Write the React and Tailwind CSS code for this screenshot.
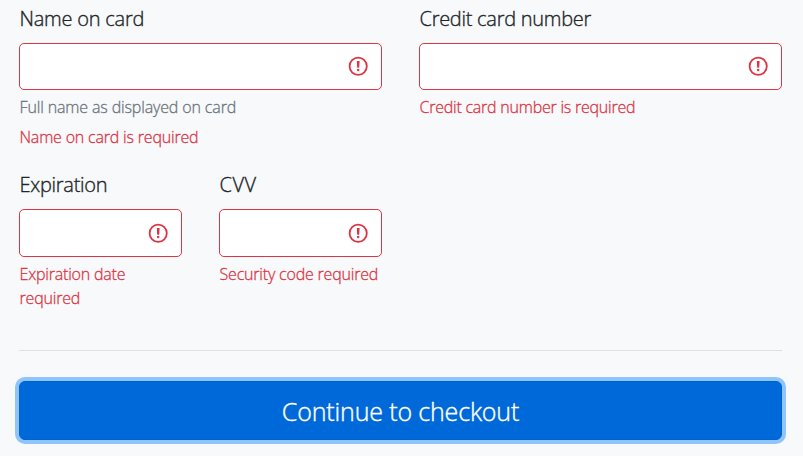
function ErrorIcon() {
  return (
    <svg className="h-5 w-5 shrink-0" viewBox="0 0 20 20" fill="none">
      <circle cx="10.2" cy="10.2" r="8.6" stroke="#dc3545" strokeWidth="1.8" />
      <path d="M8.8 4.9H11.6L11.2 11.8H9.2Z" fill="#dc3545" />
      <circle cx="10.2" cy="14.1" r="1.25" fill="#dc3545" />
    </svg>
  );
}

function Field({
  label,
  width,
  inputHeight = "h-12",
  labelTracking = "tracking-[-0.27px]",
  errorTracking = "tracking-[-0.19px]",
  help,
  error,
}) {
  return (
    <div className={width}>
      <div className={`h-[30px] whitespace-nowrap pl-[0.5px] text-[20px] leading-[30px] [-webkit-text-stroke:0.35px] ${labelTracking}`}>{label}</div>
      <div className={`mt-[9px] flex items-center justify-end rounded-[5px] border border-[#dc3545] bg-white pr-[13px] ${inputHeight}`}>
        <ErrorIcon />
      </div>
      {help && <div className="mt-[5px] pl-[0.5px] text-[16px] leading-6 tracking-[-0.14px] text-[#6c757d]">{help}</div>}
      <div className={`pl-[0.5px] text-[16px] leading-6 text-[#dc3545] ${errorTracking} ${help ? "mt-[6px]" : "mt-[5px]"}`}>{error}</div>
    </div>
  );
}

export default function App() {
  return (
    <div className="h-[456px] overflow-hidden bg-[#f8f9fa] px-[19px] pt-[4px] font-['Open_Sans',sans-serif] font-light text-[#212529] [-webkit-text-stroke:0.3px]">
      <div className="flex h-[166px] gap-[37px]">
        <Field width="w-[363px]" inputHeight="h-[47px] pb-px" label="Name on card" labelTracking="tracking-[-0.22px]" help="Full name as displayed on card" error="Name on card is required" />
        <Field width="w-[363px]" inputHeight="h-[47px] pb-px" label="Credit card number" error="Credit card number is required" errorTracking="tracking-[-0.23px]" />
      </div>
      <div className="flex h-[180px] gap-[37px]">
        <Field width="w-[163px]" label="Expiration" error="Expiration date required" />
        <Field width="w-[163px]" label="CVV" labelTracking="tracking-[0.5px]" error="Security code required" />
      </div>
      <div className="w-[763px] border-t border-[#dfe0e1]" />
      <button className="mt-[30px] h-[59px] w-[763px] rounded-[6px] border border-[#0062cc] bg-[#0069d9] pt-[2px] text-[25px] tracking-[-0.15px] text-white ring-4 ring-[#8fc4ff] [-webkit-text-stroke:0.4px]">
        Continue to checkout
      </button>
    </div>
  );
}
